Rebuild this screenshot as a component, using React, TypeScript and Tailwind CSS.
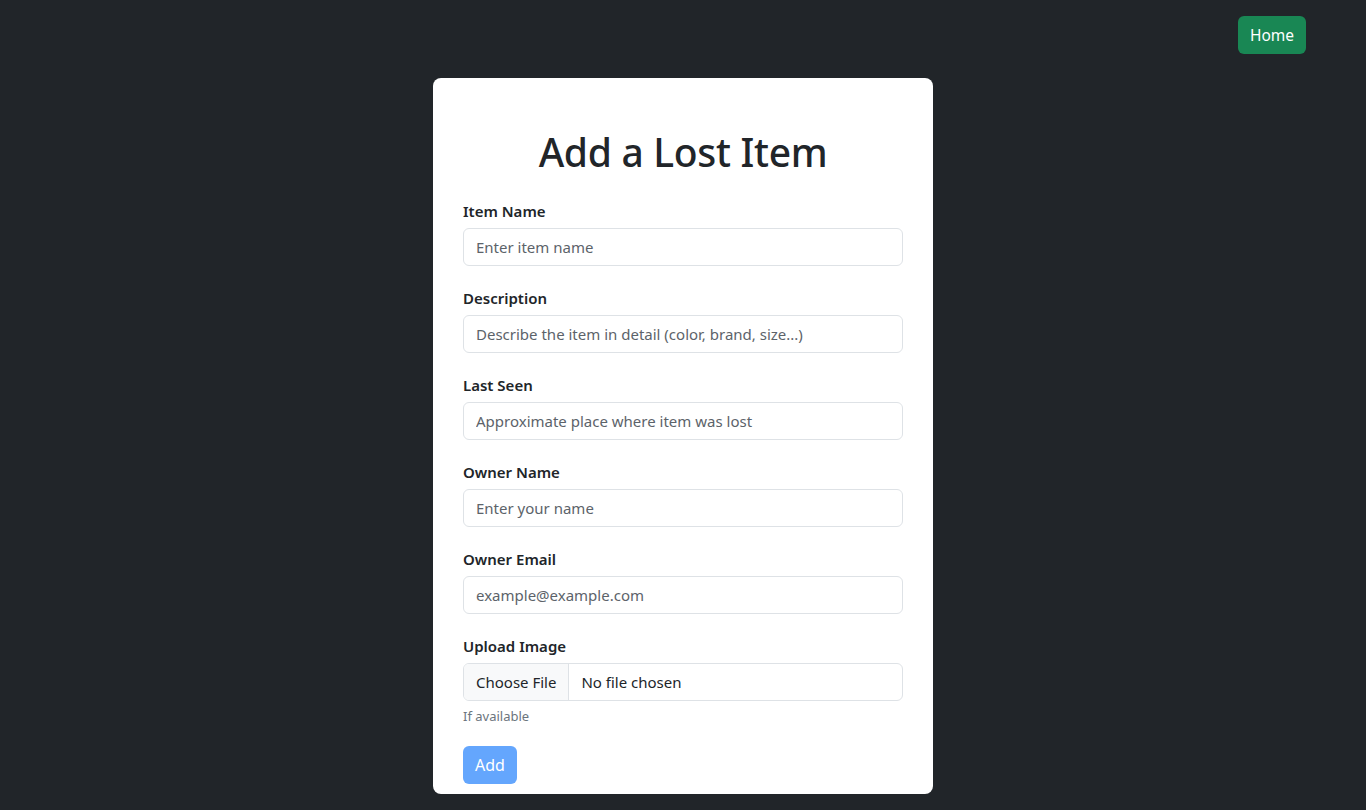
export default function App() {
  const fields = [
    { label: "Item Name", placeholder: "Enter item name" },
    { label: "Description", placeholder: "Describe the item in detail (color, brand, size...)" },
    { label: "Last Seen", placeholder: "Approximate place where item was lost" },
    { label: "Owner Name", placeholder: "Enter your name" },
    { label: "Owner Email", placeholder: "example@example.com" },
  ];

  return (
    <div
      className="min-h-[810px] bg-[#212529] text-[#212529] relative"
      style={{ fontFamily: '"Noto Sans", "Open Sans", sans-serif' }}
    >
      {/* top bar */}
      <div className="flex justify-end pt-4 pr-[60px]">
        <button className="h-[38px] px-3 rounded-md bg-[#198754] text-white text-[15.5px] leading-6">Home</button>
      </div>

      {/* form card */}
      <div className="flex justify-center mt-6">
        <form className="w-[500px] bg-white rounded-lg px-[30px] pt-[50px] pb-[10px]">
          <h1 className="text-[39px] leading-[48px] font-medium text-center mb-[23px] tracking-[-0.3px]">Add a Lost Item</h1>

          {fields.map((f) => (
            <div key={f.label} className="mb-5">
              <label className="block text-[15px] leading-6 font-semibold mb-[5px]">{f.label}</label>
              <input
                type="text"
                placeholder={f.placeholder}
                className="w-full h-[38px] px-3 border border-[#dee2e6] rounded-md text-[15px] placeholder:text-[#5c636a] outline-none"
              />
            </div>
          ))}

          <div className="mb-[19px]">
            <label className="block text-[15px] leading-6 font-semibold mb-[5px]">Upload Image</label>
            <div className="flex h-[38px] border border-[#dee2e6] rounded-md overflow-hidden text-[15px]">
              <span className="flex items-center px-3 bg-[#f8f9fa] border-r border-[#dee2e6]">Choose File</span>
              <span className="flex items-center px-3">No file chosen</span>
            </div>
            <div className="mt-[5px] text-[13px] leading-[21px] text-[#6c757d]">If available</div>
          </div>

          <button
            type="button"
            className="h-[38px] px-3 rounded-md bg-[#64a6fd] text-white text-base"
          >
            Add
          </button>
        </form>
      </div>
    </div>
  );
}
